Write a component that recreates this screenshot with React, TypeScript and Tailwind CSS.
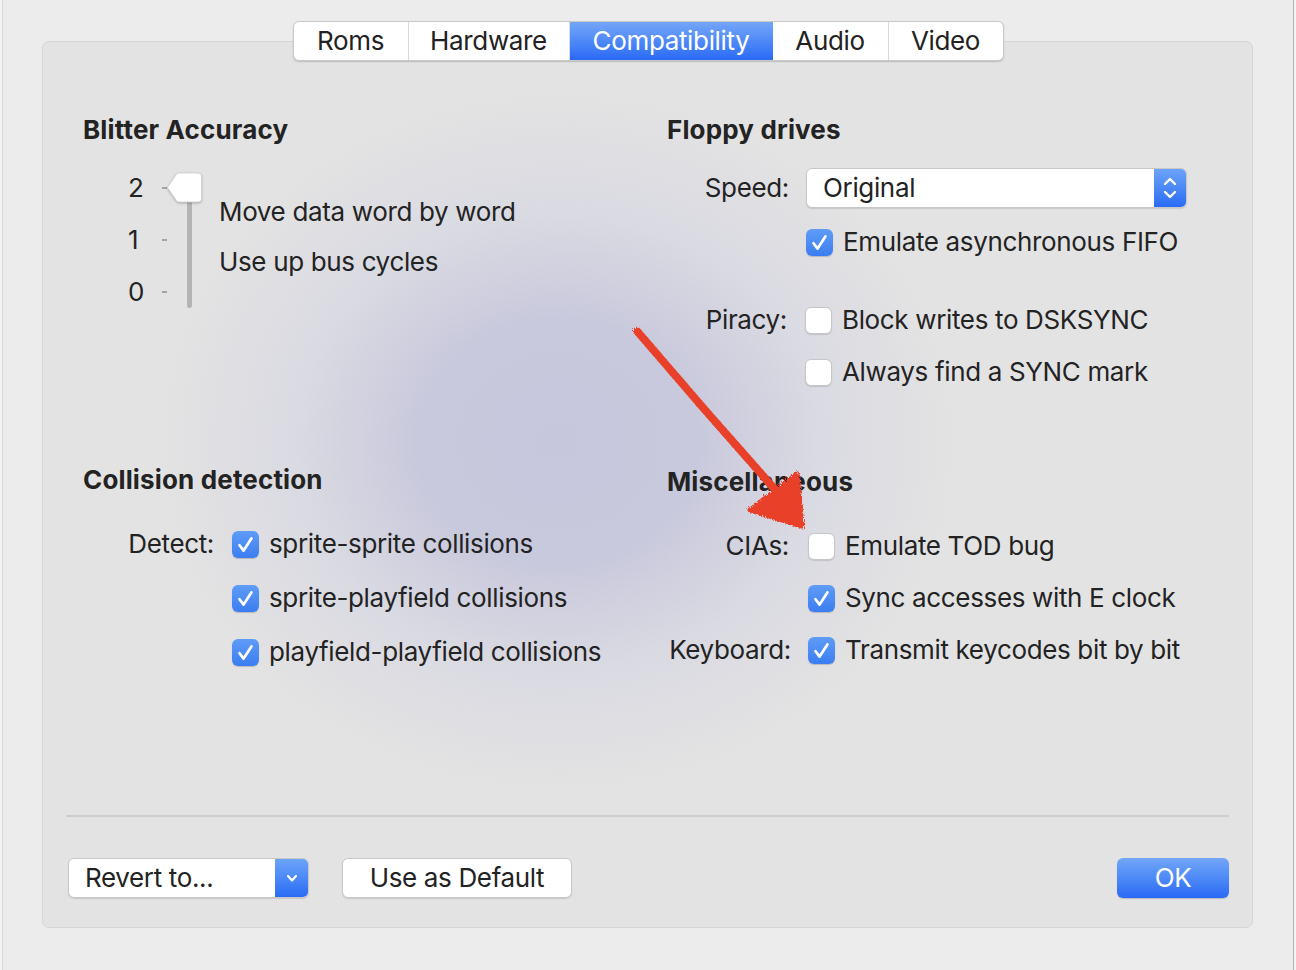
import React from "react";

const Check = ({ on }: { on?: boolean }) =>
  on ? (
    <span className="flex h-[27px] w-[27px] shrink-0 items-center justify-center rounded-[6px] bg-gradient-to-b from-[#5f9cf7] to-[#3b7df1] shadow-[0_1px_1px_rgba(0,0,0,0.18)]">
      <svg width="27" height="27" viewBox="0 0 27 27">
        <path d="M7.5 14.2 L11.6 19.6 L19.4 7.4" fill="none" stroke="white" strokeWidth="2.7" strokeLinecap="round" strokeLinejoin="round" />
      </svg>
    </span>
  ) : (
    <span className="h-[27px] w-[27px] shrink-0 rounded-[6px] border border-[#c6c6c6] bg-white shadow-[0_1px_1px_rgba(0,0,0,0.12)]" />
  );

const Option = ({ on, label }: { on?: boolean; label: string }) => (
  <div className="flex items-center gap-[10px]">
    <Check on={on} />
    <span>{label}</span>
  </div>
);

const Tab = ({ label, width, active, last }: { label: string; width: string; active?: boolean; last?: boolean }) => (
  <div
    className={`flex h-full items-center justify-center ${width} ${
      active ? "bg-gradient-to-b from-[#74a6f7] to-[#2a69f5] text-white" : "text-[#222]"
    } ${last || active ? "" : "border-r border-[#dadada]"}`}
  >
    {label}
  </div>
);

export default function App() {
  return (
    <div className="relative h-[970px] w-[1296px] overflow-hidden bg-[#f3f3f3] px-[2px] font-['Inter','Noto_Sans',sans-serif] text-[26px] leading-8 tracking-[-0.35px] text-[#232323]">
      <div className="flex h-full flex-col border-x border-l-[#d9d9d9] border-r-[#b3b3b3] bg-[#ececec] pt-[21px]">
        {/* tabs */}
        <div className="relative z-10 mx-auto flex h-[40px] overflow-hidden rounded-[6px] border border-[#c9c9c9] bg-white shadow-[0_1px_1.5px_rgba(0,0,0,0.18)]">
          <Tab label="Roms" width="w-[115px]" />
          <Tab label="Hardware" width="w-[161px]" />
          <Tab label="Compatibility" width="w-[203px]" active />
          <Tab label="Audio" width="w-[116px]" />
          <Tab label="Video" width="w-[114px]" last />
        </div>

        {/* panel */}
        <div className="-mt-[20px] ml-[39px] flex h-[887px] w-[1211px] flex-col rounded-[7px] border border-[#d5d5d5] bg-[#e3e3e3] bg-[radial-gradient(ellipse_400px_350px_at_515px_400px,#c6c7dd_0%,#c9c9dd_35%,#d5d5e2aa_65%,#e3e3e300_100%)] pt-[72px]">
          <div className="flex">
            {/* left column */}
            <div className="ml-[40px] flex w-[584px] flex-col">
              <div className="h-8 font-bold tracking-[0.15px]">Blitter Accuracy</div>

              <div className="mt-[16px] flex pl-[45px]">
                <div className="flex w-[16px] flex-col">
                  <div className="flex h-[52px] items-center">2</div>
                  <div className="flex h-[52px] items-center">1</div>
                  <div className="flex h-[52px] items-center">0</div>
                </div>
                <div className="ml-[18px] flex w-[5px] flex-col">
                  <div className="flex h-[52px] items-center"><span className="h-[2px] w-[5px] bg-[#a3a3a3]" /></div>
                  <div className="flex h-[52px] items-center"><span className="h-[2px] w-[5px] bg-[#a3a3a3]" /></div>
                  <div className="flex h-[52px] items-center"><span className="h-[2px] w-[5px] bg-[#a3a3a3]" /></div>
                </div>
                <div className="-ml-[1px] flex w-[36px] flex-col">
                  <svg width="37" height="33" viewBox="0 0 37 33" className="mt-[9px] -mb-[2px] drop-shadow-[0_1px_1px_rgba(0,0,0,0.25)]">
                    <path d="M1.5 16.5 L10.5 3.2 Q11.5 2 13 2 L32 2 Q35.5 2 35.5 5.5 L35.5 27.5 Q35.5 31 32 31 L13 31 Q11.5 31 10.5 29.8 Z" fill="white" stroke="#d0d0d0" strokeWidth="0.8" />
                  </svg>
                  <div className="ml-[21px] h-[106px] w-[5px] rounded-b-full bg-[#b4b4b4]" />
                </div>
                <div className="ml-[17px] flex flex-col gap-[18px] pt-[34px]">
                  <div>Move data word by word</div>
                  <div>Use up bus cycles</div>
                </div>
              </div>

              <div className="mt-[146px] h-8 font-bold tracking-[0.15px]">Collision detection</div>
              <div className="mt-[32px] flex flex-col gap-[22px]">
                <div className="flex h-8 items-center">
                  <div className="w-[131px] text-right">Detect:</div>
                  <div className="ml-[18px]"><Option on label="sprite-sprite collisions" /></div>
                </div>
                <div className="flex h-8 items-center pl-[149px]">
                  <Option on label="sprite-playfield collisions" />
                </div>
                <div className="flex h-8 items-center pl-[149px]">
                  <Option on label="playfield-playfield collisions" />
                </div>
              </div>
            </div>

            {/* right column */}
            <div className="flex flex-col">
              <div className="h-8 font-bold tracking-[0.15px]">Floppy drives</div>
              <div className="mt-[22px] flex h-[40px] items-center">
                <div className="w-[122px] text-right">Speed:</div>
                <div className="ml-[17px] flex h-[40px] w-[381px] overflow-hidden rounded-[6px] border border-[#c8c8c8] bg-white shadow-[0_1px_1px_rgba(0,0,0,0.12)]">
                  <div className="flex flex-1 items-center pl-[16px]">Original</div>
                  <div className="flex w-[32px] items-center justify-center bg-gradient-to-b from-[#6da3f7] to-[#2a6bf5]">
                    <svg width="16" height="26" viewBox="0 0 16 26">
                      <path d="M3 9 L8 4 L13 9 M3 17 L8 22 L13 17" fill="none" stroke="white" strokeWidth="2.4" strokeLinecap="round" strokeLinejoin="round" />
                    </svg>
                  </div>
                </div>
              </div>
              <div className="mt-[18px] flex h-8 items-center pl-[139px]">
                <Option on label="Emulate asynchronous FIFO" />
              </div>
              <div className="mt-[46px] flex h-8 items-center">
                <div className="w-[120px] text-right">Piracy:</div>
                <div className="ml-[18px]"><Option label="Block writes to DSKSYNC" /></div>
              </div>
              <div className="mt-[20px] flex h-8 items-center pl-[138px]">
                <Option label="Always find a SYNC mark" />
              </div>

              <div className="mt-[78px] h-8 font-bold tracking-[0.15px]">Miscellaneous</div>
              <div className="mt-[32px] flex h-8 items-center">
                <div className="w-[122px] text-right">CIAs:</div>
                <div className="ml-[19px]"><Option label="Emulate TOD bug" /></div>
              </div>
              <div className="mt-[20px] flex h-8 items-center pl-[141px]">
                <Option on label="Sync accesses with E clock" />
              </div>
              <div className="mt-[20px] flex h-8 items-center">
                <div className="w-[124px] text-right">Keyboard:</div>
                <div className="ml-[17px]"><Option on label="Transmit keycodes bit by bit" /></div>
              </div>
            </div>
          </div>

          <div className="mx-[23px] mt-auto h-[2px] bg-[#cecece]" />
          <div className="mt-[41px] mb-[29px] flex h-[40px] items-center pl-[25px] pr-[23px]">
            <div className="flex h-[40px] w-[241px] overflow-hidden rounded-[6px] border border-[#c8c8c8] bg-white shadow-[0_1px_1px_rgba(0,0,0,0.12)]">
              <div className="flex flex-1 items-center pl-[16px]">Revert to...</div>
              <div className="flex w-[33px] items-center justify-center bg-gradient-to-b from-[#6da3f7] to-[#2a6bf5]">
                <svg width="14" height="14" viewBox="0 0 14 14">
                  <path d="M3 5 L7 9.5 L11 5" fill="none" stroke="white" strokeWidth="2.2" strokeLinecap="round" strokeLinejoin="round" />
                </svg>
              </div>
            </div>
            <div className="ml-[33px] flex h-[40px] w-[230px] items-center justify-center rounded-[6px] border border-[#c8c8c8] bg-white shadow-[0_1px_1px_rgba(0,0,0,0.12)]">
              Use as Default
            </div>
            <div className="ml-auto flex h-[40px] w-[112px] items-center justify-center rounded-[6px] bg-gradient-to-b from-[#72a6f7] to-[#2a69f5] text-white shadow-[0_1px_1px_rgba(0,0,0,0.18)]">
              OK
            </div>
          </div>
        </div>
      </div>

      {/* red annotation arrow */}
      <svg className="pointer-events-none absolute left-0 top-0" width="1296" height="970" viewBox="0 0 1296 970">
        <defs>
          <filter id="rough" x="-10%" y="-10%" width="120%" height="120%">
            <feTurbulence type="fractalNoise" baseFrequency="0.9" numOctaves="2" result="n" />
            <feDisplacementMap in="SourceGraphic" in2="n" scale="6" />
          </filter>
        </defs>
        <g filter="url(#rough)" fill="#e9412b" stroke="#e9412b" strokeLinecap="round" strokeLinejoin="round">
          <path d="M637 331 L705 410 L786 502" fill="none" strokeWidth="8" />
          <polygon points="750,510 797,474 802,526" strokeWidth="5" />
        </g>
      </svg>
    </div>
  );
}
